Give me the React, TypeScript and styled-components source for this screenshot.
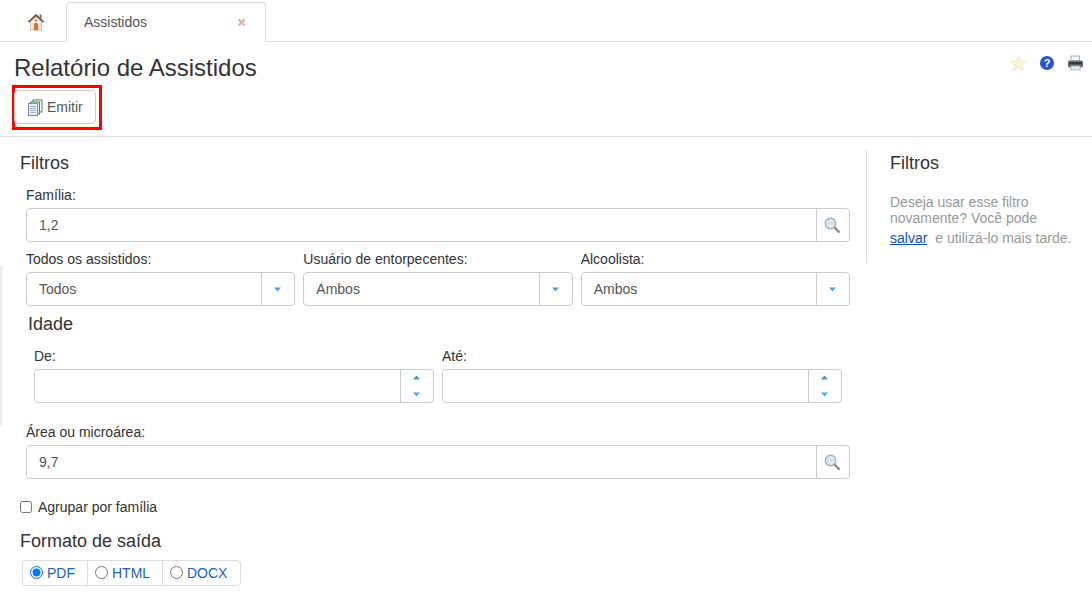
import styled, { createGlobalStyle } from "styled-components";

const GlobalStyle = createGlobalStyle`
  html, body {
    margin: 0;
    padding: 0;
    background: #fff;
    font-family: "Liberation Sans", Arial, sans-serif;
    font-size: 14px;
    color: #333;
  }
`;

const Page = styled.div`
  width: 1092px;
  height: 607px;
  overflow: hidden;
  position: relative;
`;

const TabBar = styled.div`
  height: 41px;
  display: flex;
  align-items: flex-end;
  border-bottom: 1px solid #ddd;
  padding-left: 2px;
`;

const HomeTab = styled.div`
  width: 64px;
  height: 39px;
  display: flex;
  justify-content: center;
  padding: 11px 0 0 4px;
  box-sizing: border-box;
`;

const ActiveTab = styled.div`
  width: 200px;
  height: 40px;
  box-sizing: border-box;
  margin-bottom: -1px;
  background: #fff;
  border: 1px solid #ddd;
  border-bottom: 1px solid #fff;
  border-radius: 4px 4px 0 0;
  display: flex;
  align-items: center;
  justify-content: space-between;
  padding: 0 19px 0 17px;
  color: #555;
  font-size: 14px;
`;

const TitleRow = styled.div`
  display: flex;
  justify-content: space-between;
  padding: 12px 8px 0 14px;
  height: 32px;
`;

const Title = styled.h1`
  margin: 0;
  font-size: 24px;
  font-weight: 400;
  line-height: 28px;
  color: #333;
`;

const PageIcons = styled.div`
  display: flex;
  gap: 12px;
  align-items: center;
  height: 18px;
`;

const Toolbar = styled.div`
  padding: 0 0 6px 12px;
  border-bottom: 1px solid #ddd;
`;

const Highlight = styled.div`
  width: 90px;
  height: 45px;
  box-sizing: border-box;
  border: 3px solid #f00;
  padding: 2px 0 0 0;
  margin-top: -1px;
`;

const ToolButton = styled.button`
  width: 82px;
  height: 34px;
  margin-left: -1px;
  box-sizing: border-box;
  background: #fff;
  border: 1px solid #ccc;
  border-radius: 4px;
  display: flex;
  align-items: center;
  gap: 4px;
  padding: 0 0 0 12px;
  font: 14px "Liberation Sans", Arial, sans-serif;
  color: #555;
`;

const Body = styled.div`
  display: flex;
  padding: 13px 0 0 20px;
`;

const FormColumn = styled.div`
  width: 830px;
`;

const SideColumn = styled.aside`
  margin-left: 16px;
  width: 200px;
  height: 113px;
  border-left: 1px solid #ddd;
  padding-left: 23px;
  color: #999;
  line-height: 16px;
`;

const SectionTitle = styled.h4`
  margin: 0;
  font-size: 18px;
  font-weight: 400;
  line-height: 26px;
  color: #333;
`;

const SideText = styled.p`
  margin: 18px 0 0;
  font-size: 14px;
  line-height: 16px;
  color: #999;
`;

const SaveLine = styled.p`
  margin: 4px 0 0;
  font-size: 14px;
  line-height: 16px;
  color: #999;
  white-space: nowrap;
`;

const SaveLink = styled.a`
  color: #0b4fb3;
  text-decoration: underline;
  margin-right: 4px;
`;

const Fields = styled.div`
  padding-left: 6px;
  margin-top: 11px;
`;

const Row = styled.div<{ $top?: number }>`
  display: flex;
  gap: 8px;
  margin-top: ${(p) => p.$top ?? 0}px;
`;

const Field = styled.div`
  flex: 1;
  min-width: 0;
`;

const Label = styled.label`
  display: block;
  font-size: 14px;
  line-height: 16px;
  margin-bottom: 5px;
  color: #333;
`;

const InputGroup = styled.div`
  display: flex;
  height: 34px;
  box-sizing: border-box;
  border: 1px solid #ccc;
  border-radius: 4px;
  background: #fff;
`;

const InputValue = styled.div<{ $pad: number }>`
  flex: 1;
  min-width: 0;
  padding-left: ${(p) => p.$pad}px;
  line-height: 32px;
  color: #555;
  font-size: 14px;
`;

const Addon = styled.div`
  width: 33px;
  box-sizing: border-box;
  flex: none;
  border-left: 1px solid #ccc;
  padding-right: 1px;
  display: flex;
  flex-direction: column;
  align-items: center;
  justify-content: center;
`;

const SpinAddon = styled(Addon)`
  justify-content: space-between;
  padding-top: 5px;
  padding-bottom: 5px;
`;

const AgeBlock = styled.div`
  padding-left: 8px;
  width: 816px;
  box-sizing: border-box;
`;

const AgeTitle = styled(SectionTitle)`
  margin: 5px 0 11px -6px;
`;

const CheckRow = styled.label`
  display: flex;
  align-items: center;
  gap: 6px;
  margin-top: 20px;
  height: 16px;
  font-size: 14px;
  color: #333;
`;

const Check = styled.input`
  margin: 0;
  width: 12px;
  height: 12px;
`;

const FormatTitle = styled(SectionTitle)`
  margin-top: 13px;
`;

const RadioGroup = styled.div`
  display: inline-flex;
  margin: 6px 0 0 2px;
  height: 26px;
  box-sizing: border-box;
  border: 1px solid #ddd;
  border-radius: 4px;
`;

const RadioItem = styled.label<{ $w: number }>`
  width: ${(p) => p.$w}px;
  box-sizing: border-box;
  display: flex;
  align-items: center;
  padding-left: 7px;
  color: #1d5fb0;
  font-size: 14px;
  & + & {
    border-left: 1px solid #ddd;
  }
`;

const Radio = styled.input`
  margin: 0 4px 2px 0;
  width: 13px;
  height: 13px;
`;

const EdgeShadow = styled.div`
  position: absolute;
  left: 0;
  top: 266px;
  width: 3px;
  height: 160px;
  background: linear-gradient(to right, #e8e8e8, #f8f8f8);
`;

const Home = () => (
  <svg width="18" height="18" viewBox="0 0 18 18">
    <path d="M3.5 8.5 L9 3.5 L14.5 8.5 V17 H3.5 Z" fill="#f5ecdc" stroke="#b7a58e" strokeWidth=".7" />
    <path d="M9 .8 L.5 8.8 L2.3 9.6 L9 3.6 L15.7 9.6 L17.5 8.8 Z" fill="#6f6156" />
    <rect x="12.6" y="1.5" width="2" height="4" fill="#7d6f62" />
    <path d="M6.8 17 V12 A2.2 2.2 0 0 1 11.2 12 V17 Z" fill="#c9773a" />
    <circle cx="9" cy="7.5" r="1.1" fill="#8f7a62" />
  </svg>
);

const Close = () => (
  <svg width="9" height="9" viewBox="0 0 9 9">
    <path d="M1.5 1.5 L7.5 7.5 M7.5 1.5 L1.5 7.5" stroke="#e9a9ae" strokeWidth="2.2" />
  </svg>
);

const Star = () => (
  <svg width="17" height="17" viewBox="0 0 17 17">
    <path d="M8.5 1 L10.8 6 L16.2 6.6 L12.2 10.3 L13.3 15.8 L8.5 13 L3.7 15.8 L4.8 10.3 L.8 6.6 L6.2 6 Z" fill="#f8f4d2" stroke="#ece6ba" strokeWidth=".7" />
  </svg>
);

const Help = () => (
  <svg width="16" height="16" viewBox="0 0 16 16">
    <circle cx="8" cy="8" r="7" fill="#2b53c9" />
    <text x="8" y="12" textAnchor="middle" fontFamily="Liberation Sans" fontWeight="700" fontSize="11" fill="#fff">?</text>
  </svg>
);

const Printer = () => (
  <svg width="17" height="16" viewBox="0 0 17 16">
    <rect x="4" y="1" width="8.5" height="5" fill="#f2f4f5" stroke="#9aa3a8" strokeWidth=".8" />
    <rect x="1" y="5.5" width="15" height="7" rx="1.5" fill="#6d7478" />
    <rect x="2" y="7" width="13" height="2.5" fill="#34393c" />
    <rect x="4" y="11" width="9" height="4" fill="#e9eef0" stroke="#9aa3a8" strokeWidth=".7" />
  </svg>
);

const Pages = () => (
  <svg width="16" height="17" viewBox="0 0 16 17">
    <rect x="6" y="1" width="9" height="12" fill="#fff" stroke="#3d8a4a" />
    <rect x="3.5" y="3" width="9" height="12" fill="#eef6ee" stroke="#3d8a4a" />
    <rect x="1.5" y="4.5" width="9" height="12" fill="#e6eef8" stroke="#7c8896" />
    <path d="M3 7.5h6M3 9.5h6M3 11.5h6M3 13.5h6" stroke="#8fa6c8" strokeWidth=".8" />
  </svg>
);

const Magnifier = () => (
  <svg width="17" height="17" viewBox="0 0 17 17">
    <circle cx="6.5" cy="6.5" r="5.2" fill="#dfe9f1" stroke="#a6aeb3" strokeWidth="1.4" />
    <path d="M2.5 6h8" stroke="#c5d2dc" strokeWidth="1" />
    <path d="M10.4 10.4 L15.6 15.6" stroke="#85898c" strokeWidth="2.2" />
  </svg>
);

const CaretDown = () => (
  <svg width="7" height="5" viewBox="0 0 7 5">
    <path d="M0 0.5H7L3.5 4.5Z" fill="#4ea6dc" />
  </svg>
);

const CaretUp = () => (
  <svg width="7" height="5" viewBox="0 0 7 5">
    <path d="M0 4.5H7L3.5 0.5Z" fill="#4a90cc" />
  </svg>
);

function LookupField({ label, value }: { label: string; value: string }) {
  return (
    <Field>
      <Label>{label}</Label>
      <InputGroup>
        <InputValue $pad={12}>{value}</InputValue>
        <Addon>
          <Magnifier />
        </Addon>
      </InputGroup>
    </Field>
  );
}

function SelectField({ label, value }: { label: string; value: string }) {
  return (
    <Field>
      <Label>{label}</Label>
      <InputGroup>
        <InputValue $pad={12}>{value}</InputValue>
        <Addon>
          <CaretDown />
        </Addon>
      </InputGroup>
    </Field>
  );
}

function SpinField({ label }: { label: string }) {
  return (
    <Field>
      <Label>{label}</Label>
      <InputGroup>
        <InputValue $pad={12} />
        <SpinAddon>
          <CaretUp />
          <CaretDown />
        </SpinAddon>
      </InputGroup>
    </Field>
  );
}

export default function App() {
  return (
    <Page>
      <GlobalStyle />
      <EdgeShadow />
      <TabBar>
        <HomeTab>
          <Home />
        </HomeTab>
        <ActiveTab>
          Assistidos
          <Close />
        </ActiveTab>
      </TabBar>
      <TitleRow>
        <Title>Relatório de Assistidos</Title>
        <PageIcons>
          <Star />
          <Help />
          <Printer />
        </PageIcons>
      </TitleRow>
      <Toolbar>
        <Highlight>
          <ToolButton>
            <Pages />
            Emitir
          </ToolButton>
        </Highlight>
      </Toolbar>
      <Body>
        <FormColumn>
          <SectionTitle>Filtros</SectionTitle>
          <Fields>
            <LookupField label="Família:" value="1,2" />
            <Row $top={9}>
              <SelectField label="Todos os assistidos:" value="Todos" />
              <SelectField label="Usuário de entorpecentes:" value="Ambos" />
              <SelectField label="Alcoolista:" value="Ambos" />
            </Row>
            <AgeBlock>
              <AgeTitle>Idade</AgeTitle>
              <Row>
                <SpinField label="De:" />
                <SpinField label="Até:" />
              </Row>
            </AgeBlock>
            <Row $top={21}>
              <LookupField label="Área ou microárea:" value="9,7" />
            </Row>
          </Fields>
          <CheckRow>
            <Check type="checkbox" readOnly />
            Agrupar por família
          </CheckRow>
          <FormatTitle>Formato de saída</FormatTitle>
          <RadioGroup>
            <RadioItem $w={64}>
              <Radio type="radio" name="fmt" defaultChecked />
              PDF
            </RadioItem>
            <RadioItem $w={75}>
              <Radio type="radio" name="fmt" />
              HTML
            </RadioItem>
            <RadioItem $w={78}>
              <Radio type="radio" name="fmt" />
              DOCX
            </RadioItem>
          </RadioGroup>
        </FormColumn>
        <SideColumn>
          <SectionTitle>Filtros</SectionTitle>
          <SideText>
            Deseja usar esse filtro
            <br />
            novamente? Você pode
          </SideText>
          <SaveLine>
            <SaveLink>salvar</SaveLink> e utilizá-lo mais tarde.
          </SaveLine>
        </SideColumn>
      </Body>
    </Page>
  );
}
